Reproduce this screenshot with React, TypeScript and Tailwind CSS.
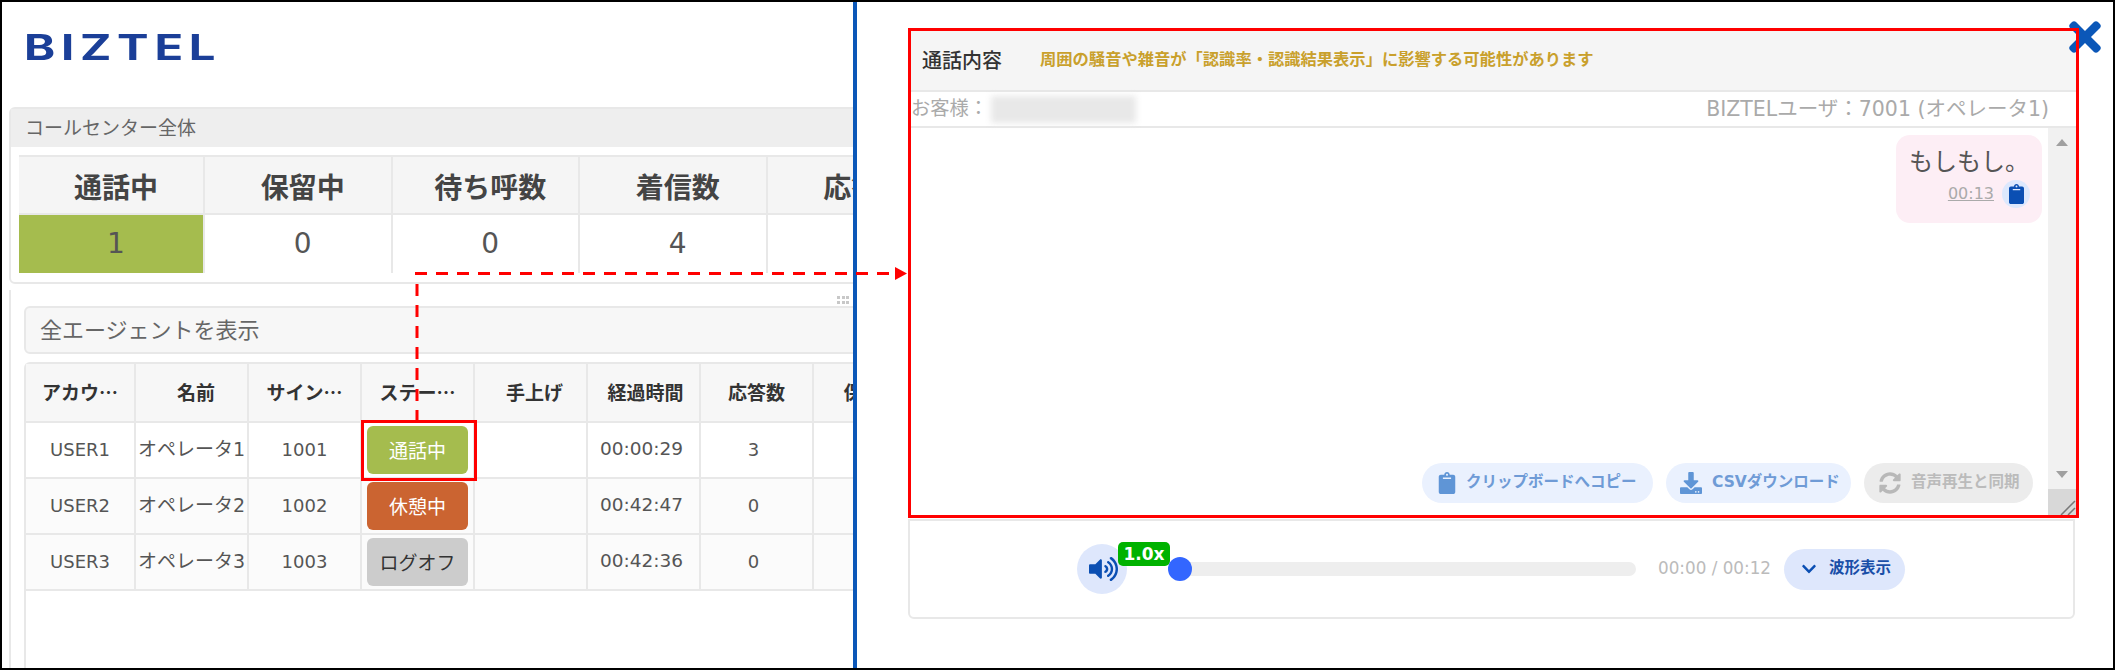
import React from 'react';
import { FaClipboard, FaDownload, FaSyncAlt, FaVolumeUp, FaChevronDown, FaTimes } from 'react-icons/fa';

const stats = [
    { label: '通話中', value: '1', active: true },
    { label: '保留中', value: '0' },
    { label: '待ち呼数', value: '0' },
    { label: '着信数', value: '4' },
    { label: '応答数', value: '3' },
];

const columns = [
    { label: 'アカウ…', pad: '' },
    { label: '名前', pad: 'pl-[9px]' },
    { label: 'サイン…', pad: '' },
    { label: 'ステー…', pad: '' },
    { label: '手上げ', pad: 'pl-[8px]' },
    { label: '経過時間', pad: 'pl-[4px]' },
    { label: '応答数', pad: '' },
    { label: '保留…', pad: 'pl-[5px]' },
];

const agents = [
    { id: 'USER1', name: 'オペレータ1', ext: '1001', status: '通話中', color: 'bg-[#a5bc4e] text-white', time: '00:00:29', count: '3' },
    { id: 'USER2', name: 'オペレータ2', ext: '1002', status: '休憩中', color: 'bg-[#cb6431] text-white', time: '00:42:47', count: '0' },
    { id: 'USER3', name: 'オペレータ3', ext: '1003', status: 'ログオフ', color: 'bg-[#cccccc] text-[#333]', time: '00:42:36', count: '0' },
];

const Cell = ({ children, className = '' }: { children?: React.ReactNode; className?: string }) => (
    <div className={`flex items-center justify-center border-r-2 border-[#e8e8e8] whitespace-nowrap ${className}`}>{children}</div>
);

const LeftPane = () => (
    <div className="w-[851px] h-full shrink-0 overflow-hidden flex flex-col">
        <div className="h-[105px] shrink-0 pl-[22px] pt-[25px]">
            <div className="text-[35px] leading-[40px] font-bold tracking-[4.25px] text-[#1b3f98] origin-left scale-x-[1.35] [font-family:'Inter',sans-serif]">BIZTEL</div>
        </div>

        <div className="ml-[7px] w-[900px] h-[177px] shrink-0 border-2 border-[#e8e8e8] rounded-md">
            <div className="h-[38px] bg-[#eeeeee] pl-[14px] flex items-center text-[19px] text-[#666]">コールセンター全体</div>
            <div className="ml-[8px] mt-[8px] w-[880px] border-t-2 border-[#e8e8e8] grid grid-cols-[186px_repeat(4,187.5px)]">
                {stats.map((s) => (
                    <Cell key={s.label} className="h-[58px] pl-[10px] pt-[2px] bg-[#f5f5f5] border-b-2 text-[28px] font-bold text-[#444] [font-family:'Noto_Sans_CJK_JP',sans-serif]">{s.label}</Cell>
                ))}
                {stats.map((s) => (
                    <Cell key={s.label} className={`h-[58px] pl-[10px] text-[28px] text-[#555] ${s.active ? 'bg-[#a5bc4e]' : 'bg-white'}`}>{s.value}</Cell>
                ))}
            </div>
        </div>

        <div className="relative ml-[7px] mt-[6px] flex-1 border-l-2 border-[#e8e8e8] pl-[13px] pt-[16px]">
            <div className="absolute left-[826px] top-[6px] grid grid-cols-3 gap-[1.5px]">
                {[0, 1, 2, 3, 4, 5].map((i) => (
                    <span key={i} className="w-[3px] h-[3px] bg-[#c8c8c8]" />
                ))}
            </div>
            <div className="w-[900px] h-[48px] bg-[#f7f7f7] border-2 border-[#e8e8e8] rounded-md pl-[14px] flex items-center text-[22px] text-[#666]">全エージェントを表示</div>

            <div className="mt-[8px] w-[950px] h-[400px] border-l-2 border-t-2 border-[#e8e8e8] rounded-tl-md">
                <div className="grid grid-cols-[110px_repeat(7,113px)] border-b-2 border-[#e8e8e8] bg-[#f7f7f7] text-[19px] font-bold text-[#333] [font-family:'Noto_Sans_CJK_JP',sans-serif]">
                    {columns.map((c) => (
                        <Cell key={c.label} className={`h-[57px] ${c.pad}`}>{c.label}</Cell>
                    ))}
                </div>
                {agents.map((a, i) => (
                    <div
                        key={a.id}
                        className={`grid grid-cols-[110px_repeat(7,113px)] border-b-2 border-[#e8e8e8] text-[18px] text-[#555] ${i === 0 ? 'bg-white' : 'bg-[#fbfbfb]'}`}
                    >
                        <Cell className="h-[54px] pb-[2px]">{a.id}</Cell>
                        <Cell className="h-[54px] pb-[2px] text-[19px]">{a.name}</Cell>
                        <Cell className="h-[54px] pb-[2px]">{a.ext}</Cell>
                        <Cell className="h-[54px]">
                            <div className={`w-[101px] h-[48px] rounded-md flex items-center justify-center pt-[3px] text-[19px] ${a.color}`}>{a.status}</div>
                        </Cell>
                        <Cell className="h-[54px]" />
                        <Cell className="h-[54px] pb-[2px] pr-[4px] text-[18.5px]">{a.time}</Cell>
                        <Cell className="h-[54px] pb-[2px] pr-[6px]">{a.count}</Cell>
                        <Cell className="h-[54px]" />
                    </div>
                ))}
            </div>
        </div>
    </div>
);

const PillButton = ({ icon, label, className }: { icon: React.ReactNode; label: string; className: string }) => (
    <div className={`h-[40px] rounded-full flex items-center gap-[10px] font-bold text-[15.5px] whitespace-nowrap ${className}`}>
        {icon}
        <span>{label}</span>
    </div>
);

const ChatCard = () => (
    <div className="w-[1171px] h-[490px] p-[3px] flex flex-col">
        <div className="h-[61px] shrink-0 bg-[#f5f5f5] border-b-2 border-[#e8e8e8] flex items-center pl-[11px] gap-[38px]">
            <span className="text-[20px] text-[#333] font-medium">通話内容</span>
            <span className="text-[16.3px] font-bold text-[#c9a02c]">周囲の騒音や雑音が「認識率・認識結果表示」に影響する可能性があります</span>
        </div>
        <div className="h-[36px] shrink-0 border-b-2 border-[#e8e8e8] flex items-center justify-between pr-[27px] text-[19.3px] text-[#aaa]">
            <div className="flex items-center">
                <span>お客様：</span>
                <div className="ml-[3px] w-[145px] h-[27px] bg-[#e8e8e8] blur-[3px]" />
            </div>
            <span className="text-[20.5px]">BIZTELユーザ：7001 (オペレータ1)</span>
        </div>
        <div className="flex-1 flex min-h-0">
            <div className="flex-1 flex flex-col justify-between pt-[7px] pr-[6px] pb-[12px]">
                <div className="self-end w-[146px] h-[88px] bg-[#fdeef5] rounded-[14px] pl-[13px] pt-[10px]">
                    <div className="text-[24px] leading-[34px] text-[#555]">もしもし。</div>
                    <div className="flex items-center justify-end pr-[12px] gap-[8px] mt-[1px]">
                        <span className="text-[16px] leading-[20px] text-[#aaa] underline">00:13</span>
                        <span className="w-[28px] h-[28px] rounded-full bg-[#dde8fd] flex items-center justify-center">
                            <FaClipboard className="text-[#0b4fb3] w-[15px] h-[20px]" />
                        </span>
                    </div>
                </div>
                <div className="flex justify-end gap-[13px] pr-[9px]">
                    <PillButton
                        icon={<FaClipboard className="w-[18px] h-[22px] text-[#5f95d6]" />}
                        label="クリップボードへコピー"
                        className="w-[231px] pl-[16px] bg-[#eaf1fe] text-[#6f9bd6]"
                    />
                    <PillButton
                        icon={<FaDownload className="w-[22px] h-[22px] text-[#5f95d6]" />}
                        label="CSVダウンロード"
                        className="w-[185px] pl-[14px] bg-[#eaf1fe] text-[#6f9bd6]"
                    />
                    <PillButton
                        icon={<FaSyncAlt className="w-[22px] h-[22px] text-[#b8b8b8]" />}
                        label="音声再生と同期"
                        className="w-[169px] pl-[15px] bg-[#ececec] text-[#bbbbbb]"
                    />
                </div>
            </div>
            <div className="w-[28px] shrink-0 bg-[#f1f1f1] flex flex-col">
                <svg viewBox="0 0 12 7" className="w-[12px] h-[7px] mt-[11px] ml-[8px] fill-[#a0a0a0]">
                    <polygon points="6,0 12,7 0,7" />
                </svg>
                <svg viewBox="0 0 12 7" className="w-[12px] h-[7px] mt-auto ml-[8px] fill-[#a0a0a0]">
                    <polygon points="0,0 12,0 6,7" />
                </svg>
                <div className="h-[26px] mt-[11px] bg-[#d8d8d8] flex justify-end items-end">
                    <svg viewBox="0 0 16 16" className="w-[16px] h-[16px] stroke-[#777]" strokeWidth="1.5">
                        <line x1="1" y1="16" x2="15" y2="2" />
                        <line x1="8" y1="16" x2="15" y2="9" />
                    </svg>
                </div>
            </div>
        </div>
    </div>
);

const Player = () => (
    <div className="w-[1167px] h-[100px] mt-[1px] border-2 border-[#e8e8e8] rounded-b-md flex items-center pl-[167px]">
        <div className="relative w-[50px] h-[50px] shrink-0 rounded-full bg-[#dee7fc] flex items-center justify-center">
            <FaVolumeUp className="w-[29px] h-[26px] text-[#0b4fb3] ml-[3px]" />
            <div className="absolute left-[41px] -top-[2px] w-[52px] h-[24px] rounded-[5px] bg-[#00b200] text-white text-[17px] font-bold leading-[24px] text-center">1.0x</div>
        </div>
        <div className="relative ml-[53px] w-[456px] h-[14px] rounded-full bg-[#eeeeee]">
            <div className="absolute -left-[12px] -top-[5px] w-[24px] h-[24px] rounded-full bg-[#3366ff]" />
        </div>
        <span className="ml-[22px] w-[113px] whitespace-nowrap text-[16.8px] text-[#bbbbbb]">00:00 / 00:12</span>
        <div className="ml-[13px] w-[121px] h-[41px] rounded-full bg-[#dee7fc] flex items-center pl-[17px] gap-[12px] font-bold text-[15.5px] text-[#1a4fa8]">
            <FaChevronDown className="w-[16px] h-[16px] text-[#0b4fb3]" />
            <span>波形表示</span>
        </div>
    </div>
);

const App = () => {
    return (
        <div lang="ja" className="relative w-[2115px] h-[670px] bg-white border-2 border-black flex overflow-hidden [font-family:'DejaVu_Sans','Noto_Sans_CJK_JP',sans-serif]">
            <LeftPane />
            <div className="w-[4px] shrink-0 bg-[#0b57b8]" />
            <div className="relative flex-1 pl-[51px] pt-[26px]">
                <ChatCard />
                <Player />
                <FaTimes className="absolute left-[1212px] top-[12px] w-[32px] h-[46px] text-[#0b57b8]" />
            </div>

            {/* callout drawn over the screenshot */}
            <svg className="absolute -left-[2px] -top-[2px] w-[2115px] h-[670px] pointer-events-none" viewBox="0 0 2115 670">
                <rect x="909.5" y="29.5" width="1168" height="487" fill="none" stroke="#ff0000" strokeWidth="3" />
                <line x1="415" y1="273.5" x2="897" y2="273.5" stroke="#ff0000" strokeWidth="3" strokeDasharray="12 9" />
                <line x1="417" y1="284" x2="417" y2="420" stroke="#ff0000" strokeWidth="3" strokeDasharray="12 9" />
                <polygon points="895,267 907,273.5 895,280" fill="#ff0000" />
                <rect x="362.5" y="421.5" width="113" height="58" fill="none" stroke="#ff0000" strokeWidth="3" />
            </svg>
        </div>
    );
};

export default App;
